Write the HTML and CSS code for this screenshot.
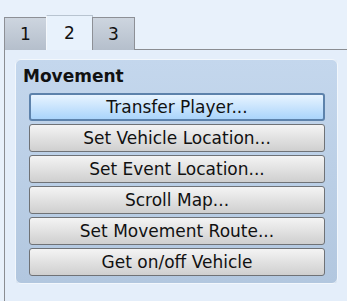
FILE: index.html
```html
<!doctype html>
<html>
  <head>
    <title>Event Commands</title>
    <meta charset="utf-8">
    <link rel="stylesheet" href="styles.css">
  </head>
  <body>
    <div class="tabs">
      <span class="tab">1</span>
      <span class="tab active">2</span>
      <span class="tab">3</span>
    </div>
    <div class="panel">
      <fieldset class="group">
        <div class="legend">Movement</div>
        <button class="focused">Transfer Player...</button>
        <button>Set Vehicle Location...</button>
        <button>Set Event Location...</button>
        <button>Scroll Map...</button>
        <button>Set Movement Route...</button>
        <button>Get on/off Vehicle</button>
      </fieldset>
    </div>
  </body>
</html>
```

FILE: styles.css
```css
html, body {
  margin: 0;
  height: 100%;
  overflow: hidden;
}
body {
  font-family: "DejaVu Sans", Verdana, sans-serif;
  font-size: 17px;
  color: #111;
  background: #e8f1fb;
  display: flex;
  flex-direction: column;
}
.tabs {
  display: flex;
  align-items: flex-end;
  padding: 15px 0 0 4px;
  position: relative;
  z-index: 1;
  margin-bottom: -1px;
}
.tab {
  width: 43px;
  height: 33px;
  display: flex;
  align-items: center;
  justify-content: center;
  border: 1px solid #8d9096;
  border-bottom: none;
  box-sizing: border-box;
  background: linear-gradient(#cdd5df, #b5bfcc);
}
.tab.active {
  width: 47px;
  height: 35px;
  background: #e8f2fc;
  border-color: #b8c4d0;
  border-left-color: #f4f8fc;
}
.tab + .tab {
  margin-left: -1px;
}
.panel {
  flex: 1;
  margin-left: 4px;
  border-top: 1px solid #8a8d92;
  border-left: 1px solid #8a8d92;
  background: #e4eefa;
  padding: 9px 0 0 10px;
}
.group {
  width: 323px;
  box-sizing: border-box;
  margin: 0;
  padding: 5px 12px 7px 13px;
  border: 1px solid #f2f7fc;
  border-radius: 6px;
  background: linear-gradient(#c4d7ed, #b2c7df);
  display: flex;
  flex-direction: column;
  gap: 3px;
}
.legend {
  font-weight: bold;
  margin: 0 0 3px -6px;
  line-height: 22px;
}
button {
  font: inherit;
  color: #111;
  height: 28px;
  padding: 0;
  border: 1px solid #6f7276;
  border-radius: 3px;
  background: linear-gradient(#f4f4f4, #cfcfcf);
}
button.focused {
  border: 2px solid #5d82ab;
  background: linear-gradient(#e8f4ff, #aad4fb);
}
```
